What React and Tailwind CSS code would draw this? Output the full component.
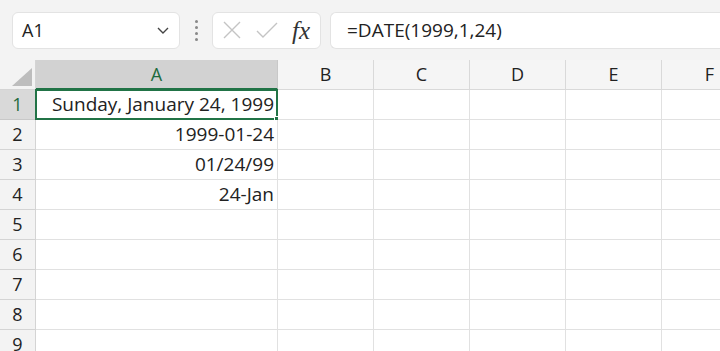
import React from 'react';

const cols = [
  { key: 'A', width: 242 },
  { key: 'B', width: 96 },
  { key: 'C', width: 96 },
  { key: 'D', width: 96 },
  { key: 'E', width: 96 },
  { key: 'F', width: 96 },
];

const data = {
  1: 'Sunday, January 24, 1999',
  2: '1999-01-24',
  3: '01/24/99',
  4: '24-Jan',
};

const rows = [1, 2, 3, 4, 5, 6, 7, 8, 9];

const font = { fontFamily: '"Open Sans", "Noto Sans", sans-serif' };

const Toolbar = () => (
  <div className="flex h-[60px] items-center bg-[#f3f3f3] pl-[12px]">
    <div className="flex h-[37px] w-[168px] items-center justify-between rounded-md border border-[#e3e3e3] bg-white pl-[9px] pr-[8px]">
      <span className="text-[18px] text-[#222]">A1</span>
      <svg width="16" height="16" viewBox="0 0 16 16" fill="none" stroke="#444" strokeWidth="1.4">
        <path d="M3 6l5 5 5-5" />
      </svg>
    </div>
    <div className="flex w-[32px] flex-col items-center gap-[3px]">
      <span className="h-[3px] w-[3px] rounded-full bg-[#888]" />
      <span className="h-[3px] w-[3px] rounded-full bg-[#888]" />
      <span className="h-[3px] w-[3px] rounded-full bg-[#888]" />
      <span className="h-[3px] w-[3px] rounded-full bg-[#888]" />
    </div>
    <div className="flex h-[37px] w-[109px] items-center rounded-md border border-[#e3e3e3] bg-white pl-[9px]">
      <svg width="20" height="20" viewBox="0 0 20 20" fill="none" stroke="#c4c4c4" strokeWidth="1.4">
        <path d="M2 2l16 16M18 2L2 18" />
      </svg>
      <svg className="ml-[14px]" width="22" height="20" viewBox="0 0 22 20" fill="none" stroke="#c4c4c4" strokeWidth="1.4">
        <path d="M1 11l6 6L21 3" />
      </svg>
      <span
        className="ml-[14px] text-[25px] leading-none italic text-[#333]"
        style={{ fontFamily: '"Liberation Serif", serif' }}
      >
        fx
      </span>
    </div>
    <div className="ml-[9px] flex h-[37px] flex-1 items-center rounded-l-md border border-r-0 border-[#e3e3e3] bg-white pl-[16px]">
      <span className="text-[19px] text-[#222]">=DATE(1999,1,24)</span>
    </div>
  </div>
);

const Grid = () => (
  <div className="overflow-hidden">
    <div className="flex h-[30px]">
      <div className="relative w-[36px] shrink-0 border-b border-r border-[#d4d4d4] bg-[#f3f3f3]">
        <svg className="absolute right-[3px] bottom-[3px]" width="20" height="18" viewBox="0 0 20 18">
          <path d="M20 0L20 18L0 18Z" fill="#bdbdbd" />
        </svg>
      </div>
      {cols.map((c) =>
        c.key === 'A' ? (
          <div
            key={c.key}
            className="flex shrink-0 items-center justify-center border-b-2 border-r border-b-[#217346] border-r-[#c8c8c8] bg-[#d2d2d2] text-[18px] text-[#1e6b3e]"
            style={{ width: c.width }}
          >
            {c.key}
          </div>
        ) : (
          <div
            key={c.key}
            className="flex shrink-0 items-center justify-center border-b border-r border-[#d9d9d9] bg-[#f5f5f5] text-[18px] text-[#222]"
            style={{ width: c.width }}
          >
            {c.key}
          </div>
        )
      )}
    </div>
    {rows.map((r) => (
      <div key={r} className="flex h-[30px]">
        <div
          className={
            r === 1
              ? 'flex w-[36px] shrink-0 items-center justify-center border-b border-r border-[#c8c8c8] bg-[#d9d9d9] text-[18px] text-[#1e6b3e]'
              : 'flex w-[36px] shrink-0 items-center justify-center border-b border-r border-[#d4d4d4] bg-[#f3f3f3] text-[18px] text-[#222]'
          }
        >
          {r}
        </div>
        {cols.map((c) => {
          const val = c.key === 'A' ? data[r] : null;
          const selected = c.key === 'A' && r === 1;
          return (
            <div
              key={c.key}
              className="relative flex shrink-0 items-center justify-end border-b border-r border-[#e1e1e1] bg-white pr-[3px] text-[19px] text-[#222]"
              style={{ width: c.width }}
            >
              {selected && (
                <>
                  <div className="absolute -top-[1px] -left-[1px] -right-[1px] -bottom-[1px] border-2 border-[#217346]" />
                  <div className="absolute -bottom-[3px] -right-[3px] h-[6px] w-[6px] border border-white bg-[#217346]" />
                </>
              )}
              <span className="relative whitespace-nowrap">{val}</span>
            </div>
          );
        })}
      </div>
    ))}
  </div>
);

export default function App() {
  return (
    <div className="h-[351px] w-[720px] overflow-hidden bg-white" style={font}>
      <Toolbar />
      <Grid />
    </div>
  );
}
